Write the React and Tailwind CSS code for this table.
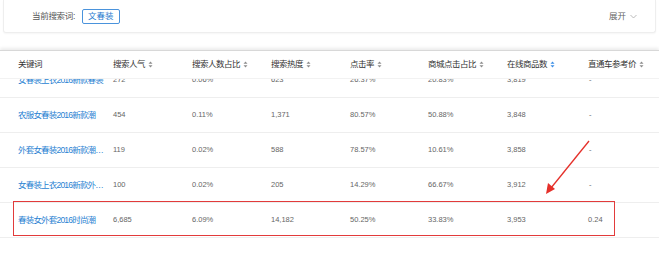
const columns = [
  { label: "搜索人气" },
  { label: "搜索人数占比" },
  { label: "搜索热度" },
  { label: "点击率" },
  { label: "商城点击占比" },
  { label: "在线商品数", active: true },
  { label: "直通车参考价" },
];

const rows = [
  ["女春装上衣2016新款春装", "272", "0.06%", "623", "26.37%", "20.83%", "3,819", "-"],
  ["农服女春装2016新款潮", "454", "0.11%", "1,371", "80.57%", "50.88%", "3,848", "-"],
  ["外套女春装2016新款潮…", "119", "0.02%", "588", "78.57%", "10.61%", "3,858", "-"],
  ["女春装上衣2016新款外…", "100", "0.02%", "205", "14.29%", "66.67%", "3,912", "-"],
  ["春装女外套2016时尚潮", "6,685", "6.09%", "14,182", "50.25%", "33.83%", "3,953", "0.24"],
];

const grid = "grid grid-cols-[95px_79px_79px_79px_78px_79px_81px_80px] pl-[18px]";

function SortIcon({ active }) {
  return (
    <svg width="5" height="7" viewBox="0 0 5 7" className="ml-[3px]">
      <path d="M2.5 0.5 L4.5 2.8 L0.5 2.8 Z" fill={active ? "#3a8ee6" : "#8c8c8c"} />
      <path d="M2.5 6.5 L4.5 4.2 L0.5 4.2 Z" fill={active ? "#3a8ee6" : "#8c8c8c"} />
    </svg>
  );
}

function Row({ cells, first }) {
  return (
    <div className={`${grid} h-[35px] items-center border-b border-[#eeeeee] ${first ? "-mt-[16px]" : ""}`}>
      <div className="truncate text-[8.5px] tracking-[-0.8px] text-[#2a82d2]">{cells[0]}</div>
      {cells.slice(1).map((c, i) => (
        <div key={i} className={`text-[7.5px] text-[#666] ${c === "-" ? "pl-[1px]" : ""}`}>
          {c}
        </div>
      ))}
    </div>
  );
}

export default function App() {
  return (
    <div
      className="relative h-[257px] w-[659px] overflow-hidden bg-white"
      style={{ fontFamily: '"Liberation Sans", "Noto Sans CJK SC", sans-serif' }}
    >
      <div className="mx-[3px] flex h-[33px] items-center justify-between rounded-b-[3px] border-x border-b border-[#eeeeee] bg-white pl-[28px] pr-[18px] shadow-[0_1px_2px_rgba(0,0,0,0.04)]">
        <div className="flex items-center">
          <span className="text-[8.5px] tracking-[-0.3px] text-[#555]">当前搜索词:</span>
          <span className="ml-[7px] flex h-[15px] items-center rounded-[2px] border border-[#4a93dc] px-[5px] text-[8.5px] text-[#2a7cd0]">
            文春装
          </span>
        </div>
        <div className="flex items-center text-[8.5px] text-[#666]">
          展开
          <svg width="7" height="5" viewBox="0 0 7 5" className="ml-[4px]">
            <path d="M0.5 1 L3.5 4 L6.5 1" fill="none" stroke="#aaa" strokeWidth="0.8" />
          </svg>
        </div>
      </div>

      <div className="mt-[17px] border-t border-[#d8d8d8] shadow-[0_-2px_3px_rgba(0,0,0,0.08)]">
        <div className={`${grid} h-[28px] items-center border-b border-[#f2f2f2] text-[8.5px] tracking-[-0.5px] text-[#333]`}>
          <div>关键词</div>
          {columns.map((c) => (
            <div key={c.label} className="flex items-center">
              {c.label}
              <SortIcon active={c.active} />
            </div>
          ))}
        </div>
        <div className="h-[179px] overflow-hidden">
          {rows.map((r, i) => (
            <Row key={i} cells={r} first={i === 0} />
          ))}
        </div>
      </div>

      <div className="absolute left-[13px] top-[201px] h-[35px] w-[602px] border-[1.5px] border-[#e23b3b]" />
      <svg className="absolute left-0 top-0" width="659" height="257">
        <line x1="589" y1="141" x2="551" y2="188" stroke="#e5302a" strokeWidth="1.3" />
        <path d="M546 194 L548 183 L555 189 Z" fill="#e5302a" />
      </svg>
    </div>
  );
}
